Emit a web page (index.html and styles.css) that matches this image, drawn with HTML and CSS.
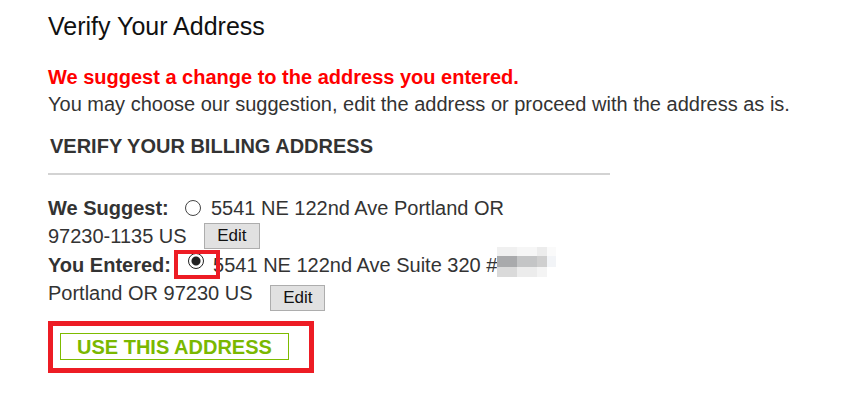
FILE: index.html
```html
<!DOCTYPE html>
<html>

<head>
    <link rel="stylesheet" href="styles.css">
</head>

<body>
    <div class="container">
        <h1 class="page-title">Verify Your Address</h1>
        <p class="notice">We suggest a change to the address you entered.</p>
        <p class="intro">You may choose our suggestion, edit the address or proceed with the address as is.</p>

        <h2 class="section-title">VERIFY YOUR BILLING ADDRESS</h2>

        <div class="option option-suggested">
            <span class="option-label">We Suggest:</span>
            <input type="radio" name="address" class="radio"> 5541 NE 122nd Ave Portland OR <span class="nowrap">97230-1135</span> US
            <button class="edit-btn">Edit</button>
        </div>
        <div class="option option-entered">
            <span class="option-label">You Entered:</span>
            <span class="radio-mark"><input type="radio" name="address" class="radio" checked></span> 5541 NE 122nd Ave Suite 320 #<span class="redacted"></span> Portland OR 97230 US
            <button class="edit-btn">Edit</button>
        </div>

        <div class="action-box">
            <button class="use-btn">USE THIS ADDRESS</button>
        </div>
    </div>
</body>

</html>
```

FILE: styles.css
```css
body {
    margin: 0;
    background-color: #fff;
    color: #333;
    font-family: "Liberation Sans", Arial, sans-serif;
}

.container {
    padding: 12px 0 0 48px;
}

.page-title {
    margin: 0;
    font-size: 25px;
    font-weight: normal;
    line-height: 29px;
    color: #111;
}

.notice {
    margin: 23px 0 0;
    font-size: 20px;
    font-weight: bold;
    line-height: 27px;
    color: #f00;
}

.intro {
    margin: 0;
    font-size: 20px;
    line-height: 27px;
    color: #333;
}

.section-title {
    width: 562px;
    box-sizing: border-box;
    margin: 15px 0 0;
    padding: 0 0 13px 2px;
    border-bottom: 2px solid #d3d3d3;
    font-size: 20px;
    line-height: 27px;
    color: #333;
}

.option {
    width: 540px;
    font-size: 20px;
    line-height: 28px;
}

.option-suggested {
    margin-top: 19px;
}

.option-entered {
    margin-top: 1px;
}

.option-label {
    font-weight: bold;
}

.nowrap {
    white-space: nowrap;
}

.radio {
    -webkit-appearance: none;
    appearance: none;
    box-sizing: border-box;
    width: 16px;
    height: 16px;
    margin: 0 4px 0 11px;
    border: 1px solid #444;
    border-radius: 50%;
    background: #fff;
    vertical-align: -1px;
}

.radio:checked {
    border: 1.5px solid #222;
    background: radial-gradient(circle, #222 0 4px, #fff 5px);
}

/* red highlight drawn round the chosen radio */
.radio-mark {
    display: inline-block;
    position: relative;
}

.radio-mark .radio {
    vertical-align: 3px;
}

.radio-mark::after {
    content: "";
    position: absolute;
    left: -3px;
    top: -1px;
    width: 46px;
    height: 29px;
    box-sizing: border-box;
    border: 4px solid #ed1c24;
}

/* pixelated part of the street number */
.redacted {
    display: inline-block;
    width: 59px;
    height: 30px;
    margin-top: -5px;
    vertical-align: -5px;
    background:
        linear-gradient(to right, #a9aaac 0 20px, #c4c5c6 20px 40px, #cfcfcf 40px 50px, #f2f4f7 50px) 0 9px / 100% 11px no-repeat,
        linear-gradient(to right, #f0f0f0 0 20px, #f6f6f6 20px 40px, #ececec 40px 50px, #fafafa 50px) 0 0 / 100% 9px no-repeat,
        linear-gradient(to right, #dadada 0 20px, #ececec 20px 40px, #f4f4f4 40px 50px, #fff 50px) 0 20px / 100% 10px no-repeat;
}

.edit-btn {
    box-sizing: border-box;
    height: 26px;
    margin-left: 12px;
    padding: 0 12px;
    border: 1px solid #adadad;
    border-radius: 0;
    background-color: #e1e1e1;
    color: #111;
    font-family: inherit;
    font-size: 17px;
    line-height: 24px;
}

.option-suggested .edit-btn {
    vertical-align: 2px;
}

.option-entered .edit-btn {
    vertical-align: -3px;
}

.action-box {
    width: fit-content;
    margin-top: 10px;
    padding: 7px 20px 8px 7px;
    border: 5px solid #ed1c24;
}

.use-btn {
    display: block;
    box-sizing: border-box;
    height: 27px;
    padding: 2px 16px 0;
    border: 1px solid #7dbb00;
    background-color: #fff;
    color: #7ab800;
    font-family: inherit;
    font-size: 20px;
    font-weight: bold;
    line-height: 23px;
}
```
